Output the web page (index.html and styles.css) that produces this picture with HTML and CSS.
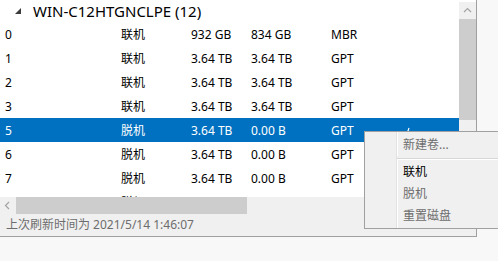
FILE: index.html
```html
<!DOCTYPE html>
<html lang="zh-CN">
<head>
    <meta charset="UTF-8">
    <meta name="viewport" content="width=device-width, initial-scale=1.0">
    <title>磁盘</title>
    <link rel="stylesheet" href="styles.css">
</head>
<body>
    <div class="panel">
        <div class="view">
            <div class="list">
                <!-- 服务器分组 -->
                <div class="group">
                    <svg class="expander" width="10" height="10" viewBox="0 0 10 10"><polygon points="7,1 7,7 1,7" fill="#3c3c3c"/></svg>
                    <span>WIN-C12HTGNCLPE (12)</span>
                </div>
                <div class="row"><span>0</span><span>联机</span><span>932 GB</span><span>834 GB</span><span>MBR</span><span></span></div>
                <div class="row"><span>1</span><span>联机</span><span>3.64 TB</span><span>3.64 TB</span><span>GPT</span><span></span></div>
                <div class="row"><span>2</span><span>联机</span><span>3.64 TB</span><span>3.64 TB</span><span>GPT</span><span></span></div>
                <div class="row"><span>3</span><span>联机</span><span>3.64 TB</span><span>3.64 TB</span><span>GPT</span><span></span></div>
                <div class="row selected"><span>5</span><span>脱机</span><span>3.64 TB</span><span>0.00 B</span><span>GPT</span>
                    <span><svg class="check" width="12" height="12" viewBox="0 0 12 12"><polyline points="1,7 4,10 7,1" fill="none" stroke="#fff" stroke-width="1.2"/></svg></span></div>
                <div class="row"><span>6</span><span>脱机</span><span>3.64 TB</span><span>0.00 B</span><span>GPT</span><span></span></div>
                <div class="row"><span>7</span><span>脱机</span><span>3.64 TB</span><span>0.00 B</span><span>GPT</span><span></span></div>
                <div class="row"><span>8</span><span>脱机</span><span>3.64 TB</span><span>0.00 B</span><span>GPT</span><span></span></div>
            </div>
            <div class="vscroll">
                <div class="vbtn">
                    <svg width="17" height="17" viewBox="0 0 17 17"><polyline points="5,10 8.5,6.5 12,10" fill="none" stroke="#a3a3a3" stroke-width="1.2"/></svg>
                </div>
                <div class="vthumb"></div>
            </div>
        </div>
        <div class="hscroll">
            <div class="hbtn">
                <svg width="16" height="17" viewBox="0 0 16 17"><polyline points="9,5 5.5,8.5 9,12" fill="none" stroke="#a3a3a3" stroke-width="1.2"/></svg>
            </div>
            <div class="hthumb"></div>
        </div>
        <div class="status">上次刷新时间为 2021/5/14 1:46:07</div>
    </div>

    <!-- 右键菜单 -->
    <div class="menu">
        <div class="item disabled">新建卷...</div>
        <div class="sep"></div>
        <div class="item">联机</div>
        <div class="item disabled">脱机</div>
        <div class="item disabled">重置磁盘</div>
    </div>
</body>
</html>
```

FILE: styles.css
```css
*{
    margin: 0;
    padding: 0;
    box-sizing: border-box;
}
body{
    background-color: #f8f8f8;
    font-family: "Noto Sans", "Noto Sans CJK SC", sans-serif;
    font-size: 12px;
    color: #000;
    overflow: hidden;
}
.panel{
    width: 477px;
    height: 237px;
    background-color: #f0f0f0;
    border-right: 1px solid #a0a0a0;
    border-bottom: 1px solid #a0a0a0;
    display: flex;
    flex-direction: column;
}
.view{
    display: flex;
    height: 197px;
}
.list{
    flex: 1;
    background-color: #fff;
    overflow: hidden;
}
.group{
    height: 22px;
    display: flex;
    align-items: center;
    font-size: 15px;
    padding-left: 14px;
    gap: 9px;
}
.expander{
    margin-top: 1px;
}
.row{
    height: 24px;
    display: grid;
    grid-template-columns: 116px 70px 60px 80px 74px 1fr;
    align-items: center;
    padding-left: 5px;
    white-space: nowrap;
}
.row.selected{
    background-color: #0071c0;
    color: #fff;
}
.check{
    display: block;
    margin: 6px 0 0 -3px;
}
.vscroll{
    width: 17px;
    border-top: 2px solid #fff;
    background-color: #f0f0f0;
}
.vbtn{
    height: 17px;
}
.vbtn svg, .hbtn svg{
    display: block;
}
.vthumb{
    height: 101px;
    background-color: #cdcdcd;
}
.hscroll{
    height: 17px;
    display: flex;
    width: 459px;
}
.hbtn{
    width: 16px;
}
.hthumb{
    width: 231px;
    background-color: #cdcdcd;
}
.status{
    height: 22px;
    line-height: 22px;
    padding-left: 6px;
    color: #6d6d6d;
    white-space: nowrap;
}
.menu{
    position: absolute;
    left: 364px;
    top: 131px;
    width: 150px;
    height: 98px;
    border: 1px solid #a0a0a0;
    padding: 2px 0 1px;
    background-color: #f0f0f0;
    background-image: linear-gradient(to right, transparent 31px, #e2e2e2 31px, #e2e2e2 32px, #fff 32px, #fff 33px, transparent 33px);
}
.item{
    height: 22px;
    line-height: 22px;
    padding-left: 38px;
    color: #000;
}
.item.disabled{
    color: #6d6d6d;
}
.sep{
    height: 5px;
    margin-left: 32px;
    border-top: 2px solid #f0f0f0;
    background: linear-gradient(#d7d7d7 1px, #fff 1px, #fff 2px, transparent 2px);
}
```
